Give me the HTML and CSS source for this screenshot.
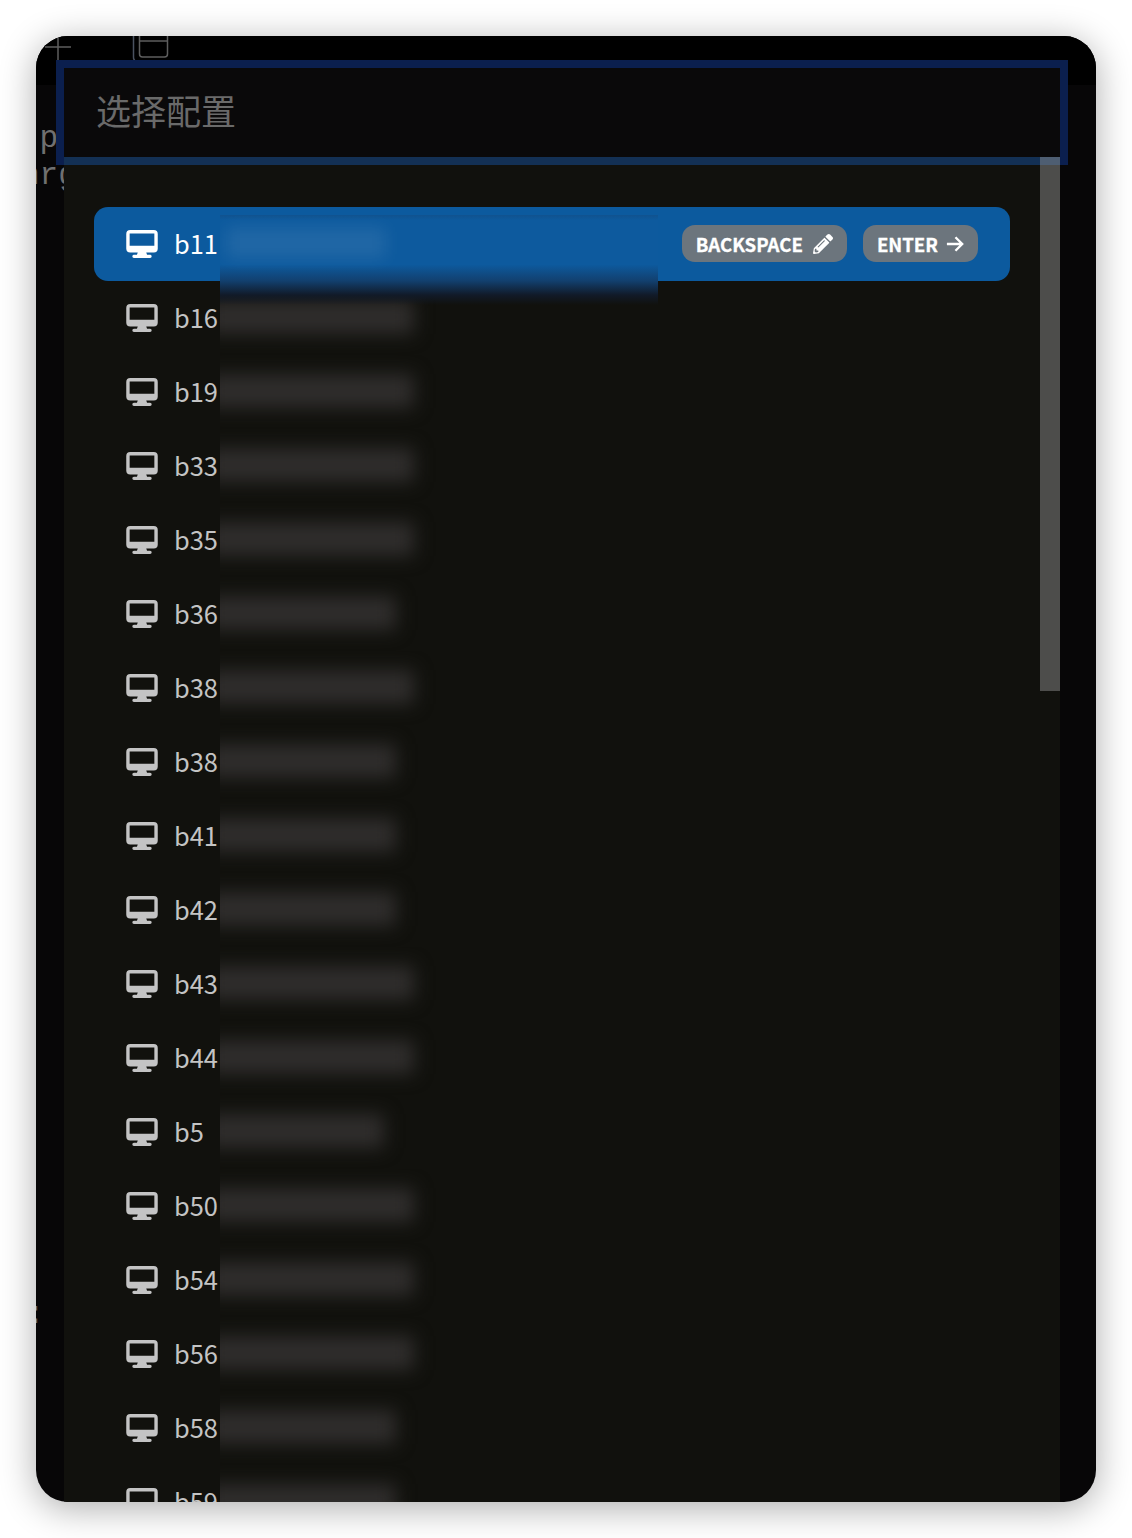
FILE: index.html
```html
<!DOCTYPE html>
<html lang="zh">
<head>
    <meta charset="UTF-8">
    <title>选择配置</title>
    <link rel="stylesheet" href="styles.css">
</head>
<body>
    <svg class="icon-defs" width="0" height="0">
        <symbol id="desktop" viewBox="0 0 31.500 28">
            <path fill="currentColor" fill-rule="evenodd" d="M4 0H27.500a4 4 0 0 1 4 4V18.400a4 4 0 0 1-4 4H20l.8 2.300h3a1.650 1.650 0 0 1 0 3.300H7.700a1.650 1.650 0 0 1 0-3.300h3l.8-2.300H4a4 4 0 0 1-4-4V4a4 4 0 0 1 4-4zM3.400 3.400V15.800H28.100V3.400z"/>
        </symbol>
    </svg>

    <div class="window">
        <!-- terminal behind the dialog -->
        <div class="tabbar">
            <svg class="tab-plus" width="28" height="26" viewBox="0 0 28 26">
                <path d="M14 0v25M1 11h26" fill="none" stroke="#5e5e5e" stroke-width="1.500"/>
            </svg>
            <svg class="tab-copy" width="38" height="28" viewBox="0 0 38 28">
                <path d="M1.500 0v21a4 4 0 0 0 4 4.500h25" fill="none" stroke="#4a5260" stroke-width="1.500"/>
                <path d="M7.500 0v18a3 3 0 0 0 3 3h22a3 3 0 0 0 3-3V0M7.500 5h28" fill="none" stroke="#5e5e5e" stroke-width="1.500"/>
            </svg>
        </div>
        <pre class="term"> p
nrg</pre>
        <div class="term-colon">:</div>

        <!-- dialog -->
        <div class="dialog">
            <div class="dialog-input">选择配置</div>
            <div class="scroll-thumb"></div>
            <ul class="profiles">
                <li class="profile active">
                    <svg class="desktop-icon"><use href="#desktop"/></svg>
                    <span class="profile-name">b11</span>
                    <span class="active-smear"><span class="smear-light"></span></span>
                    <span class="hints">
                        <span class="hint">BACKSPACE
                            <svg class="hint-icon" viewBox="0 0 512 512"><path fill="currentColor" d="M497.900 142.100l-46.100 46.100c-4.700 4.700-12.300 4.700-17 0l-111-111c-4.700-4.700-4.700-12.300 0-17l46.100-46.100c18.700-18.700 49.100-18.700 67.900 0l60.100 60.100c18.800 18.700 18.800 49.100 0 67.900zM284.200 99.800L21.600 362.400.4 483.900c-2.900 16.400 11.400 30.600 27.800 27.800l121.500-21.300 262.600-262.600c4.700-4.700 4.700-12.300 0-17l-111-111c-4.800-4.700-12.400-4.700-17.100 0zM124.100 339.900c-5.500-5.500-5.500-14.300 0-19.800l154-154c5.500-5.500 14.300-5.500 19.800 0s5.500 14.300 0 19.800l-154 154c-5.500 5.500-14.300 5.500-19.800 0zM88 424h48v36.300l-64.500 11.300-31.100-31.100L51.700 376H88v48z"/></svg>
                        </span>
                        <span class="hint enter">ENTER
                            <svg class="hint-icon arrow" viewBox="0 0 20 20"><path d="M1 10h17M10.500 2.500l7.500 7.500-7.500 7.500" fill="none" stroke="currentColor" stroke-width="2.600"/></svg>
                        </span>
                    </span>
                </li>
                <li class="profile"><svg class="desktop-icon"><use href="#desktop"/></svg><span class="profile-name">b16</span><span class="redact"><span class="redact-bar long"></span></span></li>
                <li class="profile"><svg class="desktop-icon"><use href="#desktop"/></svg><span class="profile-name">b19</span><span class="redact"><span class="redact-bar long"></span></span></li>
                <li class="profile"><svg class="desktop-icon"><use href="#desktop"/></svg><span class="profile-name">b33</span><span class="redact"><span class="redact-bar long"></span></span></li>
                <li class="profile"><svg class="desktop-icon"><use href="#desktop"/></svg><span class="profile-name">b35</span><span class="redact"><span class="redact-bar long"></span></span></li>
                <li class="profile"><svg class="desktop-icon"><use href="#desktop"/></svg><span class="profile-name">b36</span><span class="redact"><span class="redact-bar mid"></span></span></li>
                <li class="profile"><svg class="desktop-icon"><use href="#desktop"/></svg><span class="profile-name">b38</span><span class="redact"><span class="redact-bar long"></span></span></li>
                <li class="profile"><svg class="desktop-icon"><use href="#desktop"/></svg><span class="profile-name">b38</span><span class="redact"><span class="redact-bar mid"></span></span></li>
                <li class="profile"><svg class="desktop-icon"><use href="#desktop"/></svg><span class="profile-name">b41</span><span class="redact"><span class="redact-bar mid"></span></span></li>
                <li class="profile"><svg class="desktop-icon"><use href="#desktop"/></svg><span class="profile-name">b42</span><span class="redact"><span class="redact-bar mid"></span></span></li>
                <li class="profile"><svg class="desktop-icon"><use href="#desktop"/></svg><span class="profile-name">b43</span><span class="redact"><span class="redact-bar long"></span></span></li>
                <li class="profile"><svg class="desktop-icon"><use href="#desktop"/></svg><span class="profile-name">b44</span><span class="redact"><span class="redact-bar long"></span></span></li>
                <li class="profile"><svg class="desktop-icon"><use href="#desktop"/></svg><span class="profile-name">b5</span><span class="redact"><span class="redact-bar short"></span></span></li>
                <li class="profile"><svg class="desktop-icon"><use href="#desktop"/></svg><span class="profile-name">b50</span><span class="redact"><span class="redact-bar long"></span></span></li>
                <li class="profile"><svg class="desktop-icon"><use href="#desktop"/></svg><span class="profile-name">b54</span><span class="redact"><span class="redact-bar long"></span></span></li>
                <li class="profile"><svg class="desktop-icon"><use href="#desktop"/></svg><span class="profile-name">b56</span><span class="redact"><span class="redact-bar long"></span></span></li>
                <li class="profile"><svg class="desktop-icon"><use href="#desktop"/></svg><span class="profile-name">b58</span><span class="redact"><span class="redact-bar mid"></span></span></li>
                <li class="profile"><svg class="desktop-icon"><use href="#desktop"/></svg><span class="profile-name">b59</span><span class="redact"><span class="redact-bar mid"></span></span></li>
            </ul>
        </div>
    </div>
</body>
</html>
```

FILE: styles.css
```css
html, body {
    height: 100%;
}
body {
    margin: 0;
    padding: 36px;
    box-sizing: border-box;
    overflow: hidden;
    background-color: #fff;
    font-family: "Noto Sans CJK SC", "Noto Sans", sans-serif;
}
.icon-defs {
    position: absolute;
}
.window {
    position: relative;
    width: 1060px;
    height: 1466px;
    overflow: hidden;
    border-radius: 32px;
    background-color: #070607;
    box-shadow: 0 6px 36px rgba(0, 0, 0, 0.33);
}
.tabbar {
    display: flex;
    align-items: flex-start;
    height: 49px;
    background-color: #000;
}
.tab-plus {
    margin-left: 8px;
}
.tab-copy {
    margin-left: 60px;
}
.term {
    margin: 35px 0 0 -15px;
    font-family: "Liberation Mono", monospace;
    font-size: 31px;
    line-height: 37px;
    color: #707070;
}
.term-colon {
    margin: 1102px 0 0 -10px;
    font-family: "Liberation Mono", monospace;
    font-size: 31px;
    line-height: 37px;
    color: #707070;
}

.dialog {
    position: absolute;
    top: 32px;
    left: 28px;
    width: 996px;
    bottom: 0;
    background-color: #11110d;
}
.dialog-input {
    position: relative;
    z-index: 2;
    height: 89px;
    padding-left: 32px;
    font-size: 35px;
    line-height: 83px;
    color: #6a6a6a;
    background-color: #0a090a;
    box-shadow: 0 0 0 8px #0b1f4e;
}
.dialog-input::after {
    content: "";
    position: absolute;
    left: 0;
    right: 0;
    bottom: -8px;
    height: 8px;
    background-color: #133054;
}
.scroll-thumb {
    position: absolute;
    z-index: 3;
    top: 89px;
    right: 0;
    width: 20px;
    height: 534px;
    background-color: rgba(150, 150, 150, 0.45);
}

.profiles {
    list-style: none;
    margin: 0;
    padding: 50px 50px 0 30px;
}
.profile {
    position: relative;
    display: flex;
    align-items: center;
    height: 74px;
    padding: 0 32px;
    border-radius: 14px;
    font-size: 25.400px;
    color: #c4c4c4;
}
.profile.active {
    z-index: 1;
    color: #fff;
    background-color: #0c5a9e;
}
.desktop-icon {
    flex: none;
    width: 32px;
    height: 28px;
    margin: -1px 16px 0 0;
}
.profile-name {
    flex: none;
    width: 46px;
    margin-bottom: 2px;
}

/* blurred names */
.redact {
    display: block;
    height: 74px;
    width: 260px;
    overflow: hidden;
}
.redact-bar {
    display: block;
    height: 34px;
    margin: 19px 0 0 -14px;
    background-color: #2f2d2c;
    filter: blur(9px);
}
.redact-bar.long {
    width: 208px;
}
.redact-bar.mid {
    width: 190px;
}
.redact-bar.short {
    width: 178px;
}
.active-smear {
    position: absolute;
    top: 8px;
    left: 126px;
    width: 438px;
    height: 90px;
    overflow: hidden;
    background: linear-gradient(#10528f 0, #0d5a9e 6%, #0d5a9e 55%, #12406f 73%, #111a28 89%, rgba(17, 17, 13, 0) 100%);
}
.smear-light {
    position: absolute;
    top: 12px;
    left: 6px;
    width: 160px;
    height: 32px;
    background-color: rgba(255, 255, 255, 0.08);
    filter: blur(8px);
}

.hints {
    display: flex;
    gap: 16px;
    margin: -1px 0 0 auto;
}
.hint {
    display: flex;
    align-items: center;
    gap: 10px;
    height: 37px;
    padding: 0 14px;
    border-radius: 13px;
    font-size: 18.600px;
    font-weight: 700;
    -webkit-text-stroke: 0.3px #fff;
    color: #fff;
    background-color: #6c757d;
}
.hint.enter {
    gap: 8px;
}
.hint-icon {
    width: 20px;
    height: 20px;
}
.hint-icon.arrow {
    width: 18px;
    height: 18px;
}
```
